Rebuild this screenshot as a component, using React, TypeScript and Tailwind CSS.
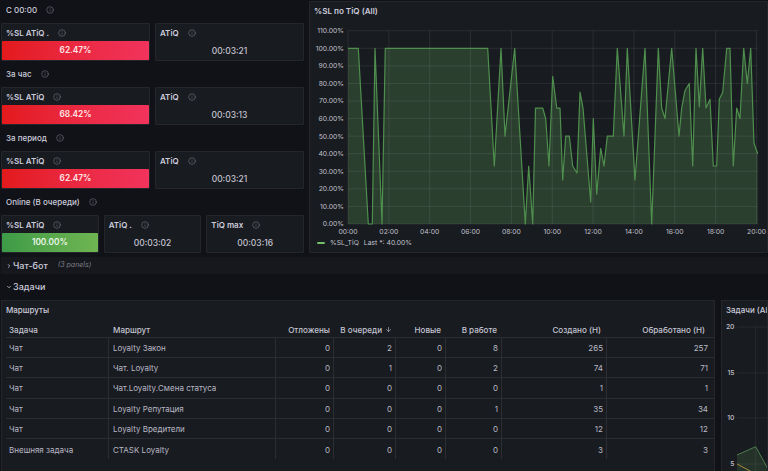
import { ArrowDown, ChevronDown, ChevronRight, Info } from "lucide-react";

const slPoints: [number, number][] = [
  [348, 100], [358.3, 100], [368.3, 0], [372.3, 0], [375, 100], [382, 0], [385.3, 100], [487.7, 100],
  [494.3, 33], [501, 100], [505, 50], [514.7, 100], [525.3, 0], [528.7, 33], [532.7, 0], [535.5, 66],
  [542.7, 66], [545.7, 60], [549, 33], [552.7, 84], [556.7, 66], [560, 66], [562.7, 25], [565.7, 50],
  [569.3, 50], [572.7, 33], [577, 29], [580, 75], [583, 66], [590.7, 12.5], [593.3, 60], [596.7, 17],
  [600.7, 43], [604, 33], [607.3, 50], [613.3, 50], [617.3, 100], [624, 50], [627.3, 100], [635, 25],
  [645, 100], [651.7, 0], [658.3, 100], [661.7, 66], [665, 60], [671.7, 100], [679, 50], [681.7, 66],
  [685, 76], [689.3, 80], [692.7, 33], [696, 100], [699.3, 66.7], [702.7, 100], [706, 66], [710, 71],
  [713.3, 33], [716.7, 33], [719.3, 71], [722.7, 75], [726.7, 100], [730, 100], [733.3, 33], [736.7, 66],
  [740, 60], [743.7, 100], [747.3, 80], [750.7, 100], [754, 46], [757.7, 40],
];

const rows = [
  ["Чат", "Loyalty Закон", 0, 2, 0, 8, 265, 257],
  ["Чат", "Чат. Loyalty", 0, 1, 0, 2, 74, 71],
  ["Чат", "Чат.Loyalty.Смена статуса", 0, 0, 0, 0, 1, 1],
  ["Чат", "Loyalty Репутация", 0, 0, 0, 1, 35, 34],
  ["Чат", "Loyalty Вредители", 0, 0, 0, 0, 12, 12],
  ["Внешняя задача", "CTASK Loyalty", 0, 0, 0, 0, 3, 3],
];

const tableCols = "grid grid-cols-[103px_167px_58px_62px_50px_56px_105px_104px]";

function InfoIcon() {
  return <Info className="w-[8px] h-[8px] text-[#7f7f8a]" strokeWidth={1.6} />;
}

function SectionTitle({ title }: { title: string }) {
  return (
    <div className="h-[20px] mb-[3px] pl-[5px] flex items-center gap-[9px] text-[8px] font-medium text-[#ccccdc]">
      {title}
      <InfoIcon />
    </div>
  );
}

function StatPanel({ title, value, color }: { title: string; value: string; color?: "red" | "green" }) {
  return (
    <div className="flex-1 h-[38px] bg-[#181b1f] border border-[#24262b] rounded-[1px] flex flex-col">
      <div className="h-[17px] shrink-0 pl-[4px] pt-[1px] flex items-center gap-[9px] text-[8px] font-semibold text-[#ccccdc]">
        {title}
        <InfoIcon />
      </div>
      {color === "red" && (
        <div className="flex-1 flex items-center justify-center rounded-[1px] bg-gradient-to-r from-[#e31a1c] to-[#f2335c] text-[8.3px] font-semibold text-[#ffe6e6]">
          {value}
        </div>
      )}
      {color === "green" && (
        <div className="flex-1 flex items-center justify-center rounded-[1px] bg-gradient-to-r from-[#3d9b47] to-[#6fb552] text-[8.3px] font-semibold text-[#eaf6e8]">
          {value}
        </div>
      )}
      {!color && (
        <div className="flex-1 pt-[2px] flex items-center justify-center text-[8.5px] font-medium text-[#c4c4d2]">{value}</div>
      )}
    </div>
  );
}

function SlChart() {
  // coordinates below are page pixels, shifted by the panel offset
  const ox = 310;
  const oy = 2;
  const px = (x: number) => x - ox;
  const py = (v: number) => 224 - 1.757 * v - oy;
  const line = slPoints.map(([x, v]) => `${px(x)},${py(v)}`).join(" ");
  const times = ["00:00", "02:00", "04:00", "06:00", "08:00", "10:00", "12:00", "14:00", "16:00", "18:00", "20:00"];
  const percents = [0, 10, 20, 30, 40, 50, 60, 70, 80, 90, 100, 110];
  return (
    <svg width="457" height="250" className="block">
      <polygon points={`${px(348)},${py(0)} ${line} ${px(757.7)},${py(0)}`} fill="#73bf69" fillOpacity="0.22" />
      {percents.map((p) => (
        <g key={p}>
          <line x1={px(348)} x2={px(757.7)} y1={py(p)} y2={py(p)} stroke="#ccccdc" strokeOpacity="0.1" />
          <text x={px(344)} y={py(p) + 2.4} textAnchor="end" fontSize="6.8" fill="#c0c0cc" fontFamily="Inter, sans-serif">
            {p}.00%
          </text>
        </g>
      ))}
      {times.map((t, i) => (
        <g key={t}>
          <line x1={px(348 + i * 40.85)} x2={px(348 + i * 40.85)} y1={py(110)} y2={py(0)} stroke="#ccccdc" strokeOpacity="0.1" />
          <text x={px(348 + i * 40.85)} y={233.5 - oy} textAnchor="middle" fontSize="6.8" fill="#c0c0cc" fontFamily="Inter, sans-serif">
            {t}
          </text>
        </g>
      ))}
      <polyline points={line} fill="none" stroke="#4f8f4e" strokeWidth="1.2" strokeLinejoin="round" />
    </svg>
  );
}

function TasksChart() {
  return (
    <svg width="46" height="153" className="block">
      {[
        ["20", 8],
        ["15", 54],
        ["10", 99],
        ["5", 145],
      ].map(([label, y]) => (
        <g key={label}>
          <line x1="15" x2="46" y1={y} y2={y} stroke="#ccccdc" strokeOpacity="0.08" />
          <text x="12.5" y={Number(y) + 2.4} textAnchor="end" fontSize="6.8" fontWeight="500" fill="#c0c0cc" fontFamily="Inter, sans-serif">
            {label}
          </text>
        </g>
      ))}
      <line x1="33.7" x2="33.7" y1="8" y2="153" stroke="#ccccdc" strokeOpacity="0.08" />
      <polygon points="15,136 33.7,127.7 46,150 46,153 15,153" fill="#73bf69" fillOpacity="0.15" />
      <polyline points="15,136 33.7,127.7 46,150" fill="none" stroke="#4f7d4c" strokeWidth="1" />
      <polyline points="15,145 30,153" fill="none" stroke="#a8893a" strokeWidth="1" />
    </svg>
  );
}

export default function App() {
  return (
    <div className="w-[768px] h-[471px] overflow-hidden bg-[#111217] font-['Inter',sans-serif]">
      <div className="flex gap-[5px] h-[253px]">
        <div className="w-[304px] pl-[1px] flex flex-col gap-[3px]">
          <div>
            <SectionTitle title="С 00:00" />
            <div className="flex gap-[5px]">
              <StatPanel title="%SL ATiQ ." value="62.47%" color="red" />
              <StatPanel title="ATiQ" value="00:03:21" />
            </div>
          </div>
          <div>
            <SectionTitle title="За час" />
            <div className="flex gap-[5px]">
              <StatPanel title="%SL ATiQ" value="68.42%" color="red" />
              <StatPanel title="ATiQ" value="00:03:13" />
            </div>
          </div>
          <div>
            <SectionTitle title="За период" />
            <div className="flex gap-[5px]">
              <StatPanel title="%SL ATiQ" value="62.47%" color="red" />
              <StatPanel title="ATiQ" value="00:03:21" />
            </div>
          </div>
          <div>
            <SectionTitle title="Online (В очереди)" />
            <div className="flex gap-[5px]">
              <StatPanel title="%SL ATiQ" value="100.00%" color="green" />
              <StatPanel title="ATiQ ." value="00:03:02" />
              <StatPanel title="TiQ max" value="00:03:16" />
            </div>
          </div>
        </div>
        <div className="relative flex-1 mt-[1px] bg-[#181b1f] border border-[#24262b] rounded-[1px] overflow-hidden">
          <div className="absolute left-[4px] top-[3px] text-[8.1px] font-semibold text-[#ccccdc]">%SL по TiQ (All)</div>
          <SlChart />
          <div className="absolute left-[7px] bottom-[4px] flex items-center gap-[5px] text-[6.8px] text-[#c0c0cc]">
            <span className="w-[8px] h-[2px] rounded-full bg-[#73bf69]" />
            <span>%SL_TiQ</span>
            <span>Last *: 40.00%</span>
          </div>
        </div>
      </div>
      <div className="mt-[4px] ml-[1px] h-[17px] bg-[#16181d] flex items-center pl-[5px] text-[9px] font-medium text-[#ccccdc]">
        <ChevronRight className="w-[6px] h-[6px] mr-[1px] text-[#ccccdc]" strokeWidth={3} />
        Чат-бот
        <span className="ml-[10px] text-[7px] font-normal italic text-[#7f7f8a]">(3 panels)</span>
      </div>
      <div className="h-[26px] ml-[1px] flex items-center pl-[5px] text-[9px] font-medium text-[#ccccdc]">
        <ChevronDown className="w-[6px] h-[6px] mr-[1px] text-[#ccccdc]" strokeWidth={3} />
        Задачи
      </div>
      <div className="flex gap-[6px] pl-[1px]">
        <div className="w-[714px] h-[190px] shrink-0 bg-[#181b1f] border border-[#24262b] pl-[4px]">
          <div className="h-[18px] flex items-center text-[8px] font-medium text-[#ccccdc]">Маршруты</div>
          <div className={`${tableCols} h-[19px] pt-[4px] border-b border-[#2b2d33] items-center text-[8.1px] font-medium text-[#c4c4d2]`}>
            <div className="pl-[3px]">Задача</div>
            <div className="pl-[4px]">Маршрут</div>
            <div className="text-right pr-[4px]">Отложены</div>
            <div className="flex items-center justify-end gap-[3px] pr-[4px] whitespace-nowrap">
              В очереди
              <ArrowDown className="w-[7px] h-[7px]" />
            </div>
            <div className="text-right pr-[5px]">Новые</div>
            <div className="text-right pr-[5px]">В работе</div>
            <div className="text-right pr-[6px]">Создано (Н)</div>
            <div className="text-right pr-[6px]">Обработано (Н)</div>
          </div>
          {rows.map((row, i) => (
            <div key={i} className={`${tableCols} h-[20.2px] border-b border-[#2b2d33] last:border-b-0 text-[8px] text-[#b9b9c6]`}>
              {row.map((cell, j) => (
                <div
                  key={j}
                  className={
                    j === 0
                      ? "pl-[3px] pt-[1px] flex items-center border-r border-[#2b2d33]"
                      : j === 1
                        ? "pl-[4px] pt-[1px] flex items-center border-r border-[#2b2d33]"
                        : "pr-[3px] pt-[1px] flex items-center justify-end border-r border-[#2b2d33] last:border-r-0"
                  }
                >
                  {cell}
                </div>
              ))}
            </div>
          ))}
        </div>
        <div className="flex-1 h-[190px] bg-[#181b1f] border border-[#24262b] overflow-hidden">
          <div className="h-[18px] pl-[4px] flex items-center text-[8px] font-medium text-[#ccccdc] whitespace-nowrap">Задачи (All)</div>
          <TasksChart />
        </div>
      </div>
    </div>
  );
}
